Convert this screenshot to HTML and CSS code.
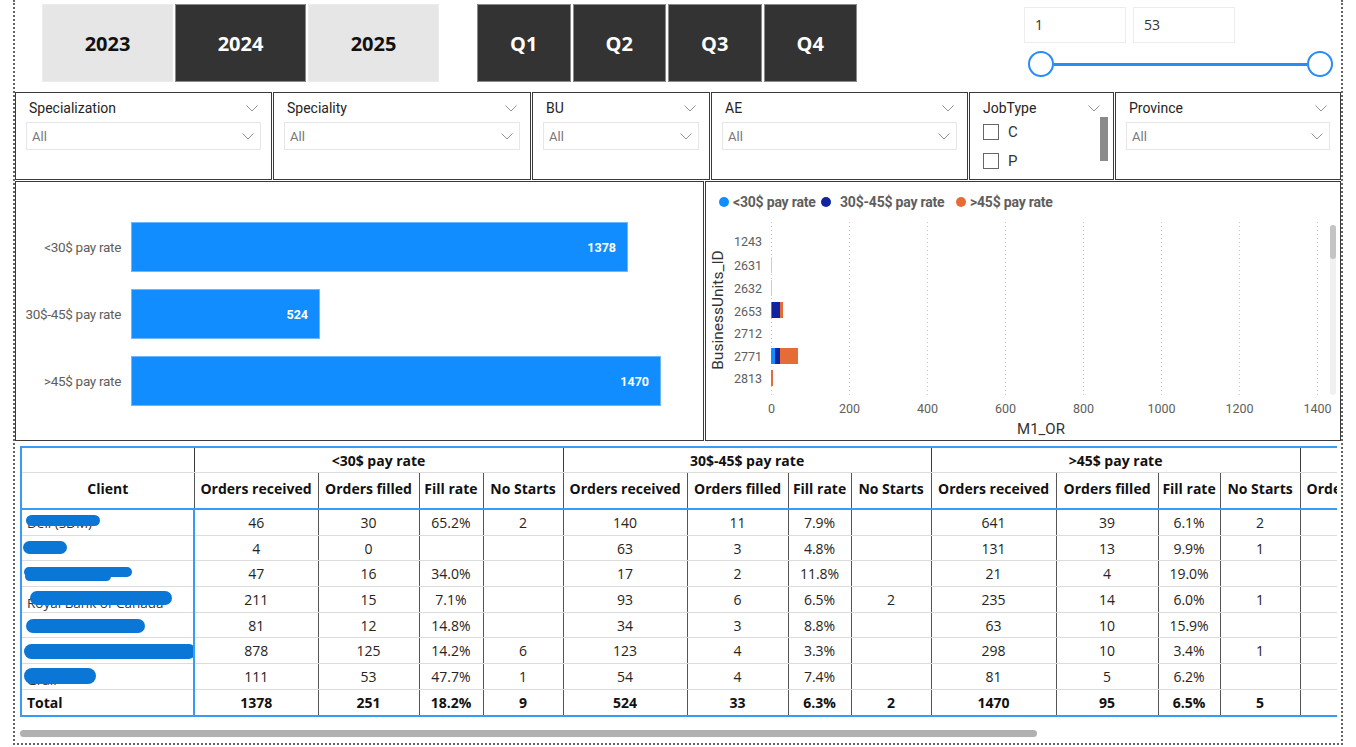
FILE: index.html
```html
<!DOCTYPE html>
<html>
<head>
<meta charset="utf-8">
<link rel="stylesheet" href="styles.css">
</head>
<body>
<div class="report">
  <div class="top-row">
    <div class="years">
      <div class="btn light">2023</div>
      <div class="btn dark">2024</div>
      <div class="btn light">2025</div>
    </div>
    <div class="quarters">
      <div class="qbtn">Q1</div>
      <div class="qbtn">Q2</div>
      <div class="qbtn">Q3</div>
      <div class="qbtn">Q4</div>
    </div>
    <div class="range">
      <div class="range-inputs">
        <div class="rbox">1</div>
        <div class="rbox">53</div>
      </div>
      <div class="slider">
        <span class="handle"></span>
        <span class="track"></span>
        <span class="handle"></span>
      </div>
    </div>
  </div>

  <div class="filters">
    <div class="slicer w-a">
      <div class="s-title"><span>Specialization</span><svg class="chev" viewBox="0 0 12 7"><polyline points="0.5,0.5 6,6 11.5,0.5"/></svg></div>
      <div class="dd"><span>All</span><svg class="chev" viewBox="0 0 12 7"><polyline points="0.5,0.5 6,6 11.5,0.5"/></svg></div>
    </div>
    <div class="slicer w-b">
      <div class="s-title"><span>Speciality</span><svg class="chev" viewBox="0 0 12 7"><polyline points="0.5,0.5 6,6 11.5,0.5"/></svg></div>
      <div class="dd"><span>All</span><svg class="chev" viewBox="0 0 12 7"><polyline points="0.5,0.5 6,6 11.5,0.5"/></svg></div>
    </div>
    <div class="slicer w-c">
      <div class="s-title"><span>BU</span><svg class="chev" viewBox="0 0 12 7"><polyline points="0.5,0.5 6,6 11.5,0.5"/></svg></div>
      <div class="dd"><span>All</span><svg class="chev" viewBox="0 0 12 7"><polyline points="0.5,0.5 6,6 11.5,0.5"/></svg></div>
    </div>
    <div class="slicer w-d">
      <div class="s-title"><span>AE</span><svg class="chev" viewBox="0 0 12 7"><polyline points="0.5,0.5 6,6 11.5,0.5"/></svg></div>
      <div class="dd"><span>All</span><svg class="chev" viewBox="0 0 12 7"><polyline points="0.5,0.5 6,6 11.5,0.5"/></svg></div>
    </div>
    <div class="slicer w-e jobtype">
      <div class="s-title"><span>JobType</span><svg class="chev" viewBox="0 0 12 7"><polyline points="0.5,0.5 6,6 11.5,0.5"/></svg></div>
      <div class="job-body">
        <div class="checks">
          <div class="chk"><span class="box"></span><span>C</span></div>
          <div class="chk"><span class="box"></span><span>P</span></div>
        </div>
        <div class="vscroll"></div>
      </div>
    </div>
    <div class="slicer w-f">
      <div class="s-title"><span>Province</span><svg class="chev" viewBox="0 0 12 7"><polyline points="0.5,0.5 6,6 11.5,0.5"/></svg></div>
      <div class="dd"><span>All</span><svg class="chev" viewBox="0 0 12 7"><polyline points="0.5,0.5 6,6 11.5,0.5"/></svg></div>
    </div>
  </div>

  <div class="charts">
    <div class="panel bar-panel">
      <div class="bar-row">
        <div class="bar-label">&lt;30$ pay rate</div>
        <div class="bar" style="width:497px"><span>1378</span></div>
      </div>
      <div class="bar-row">
        <div class="bar-label">30$-45$ pay rate</div>
        <div class="bar" style="width:189px"><span>524</span></div>
      </div>
      <div class="bar-row">
        <div class="bar-label">&gt;45$ pay rate</div>
        <div class="bar" style="width:530px"><span>1470</span></div>
      </div>
    </div>
    <div class="panel stack-panel">
      <svg class="stack" width="634" height="258" viewBox="0 0 634 258">
        <circle cx="18" cy="20" r="5" fill="#118dff"/>
        <text class="legend" x="27" y="25">&lt;30$ pay rate</text>
        <circle cx="120" cy="20" r="5" fill="#12239e"/>
        <text class="legend" x="134" y="25">30$-45$ pay rate</text>
        <circle cx="255" cy="20" r="5" fill="#e66c37"/>
        <text class="legend" x="264" y="25">&gt;45$ pay rate</text>

        <g class="grid">
          <line x1="65.5" y1="40" x2="65.5" y2="214"/>
          <line x1="143.5" y1="40" x2="143.5" y2="214"/>
          <line x1="221.5" y1="40" x2="221.5" y2="214"/>
          <line x1="299.5" y1="40" x2="299.5" y2="214"/>
          <line x1="377.5" y1="40" x2="377.5" y2="214"/>
          <line x1="455.5" y1="40" x2="455.5" y2="214"/>
          <line x1="533.5" y1="40" x2="533.5" y2="214"/>
          <line x1="611.5" y1="40" x2="611.5" y2="214"/>
        </g>

        <g class="cat">
          <text x="56" y="63.5">1243</text>
          <text x="56" y="87.5">2631</text>
          <text x="56" y="110.5">2632</text>
          <text x="56" y="133.5">2653</text>
          <text x="56" y="155.5">2712</text>
          <text x="56" y="178.5">2771</text>
          <text x="56" y="200.5">2813</text>
        </g>

        <text class="ytitle" transform="translate(16.5 128) rotate(-90)">BusinessUnits_ID</text>

        <rect x="65" y="75" width="1" height="16" fill="#f5c1ab"/>
        <rect x="65" y="98" width="1" height="16" fill="#f5c1ab"/>
        <rect x="65" y="120" width="1" height="16" fill="#118dff"/>
        <rect x="66" y="120" width="8" height="16" fill="#12239e"/>
        <rect x="74" y="120" width="3" height="16" fill="#e66c37"/>
        <rect x="65" y="166" width="4" height="16" fill="#118dff"/>
        <rect x="69" y="166" width="5" height="16" fill="#12239e"/>
        <rect x="74" y="166" width="18" height="16" fill="#e66c37"/>
        <rect x="65" y="188" width="2" height="16" fill="#e66c37"/>

        <g class="xl">
          <text x="65.5" y="231">0</text>
          <text x="143.5" y="231">200</text>
          <text x="221.5" y="231">400</text>
          <text x="299.5" y="231">600</text>
          <text x="377.5" y="231">800</text>
          <text x="455.5" y="231">1000</text>
          <text x="533.5" y="231">1200</text>
          <text x="611.5" y="231">1400</text>
        </g>
        <text class="xtitle" x="335" y="252">M1_OR</text>

        <rect x="624" y="43" width="6" height="170" rx="3" fill="#f0f0f0"/>
        <rect x="624" y="43" width="6" height="34" rx="3" fill="#c4c4c4"/>
      </svg>
    </div>
  </div>

  <div class="table-wrap">
    <table class="matrix">
      <colgroup>
        <col class="c-client">
        <col class="c-or"><col class="c-of"><col class="c-fr"><col class="c-ns">
        <col class="c-or"><col class="c-of"><col class="c-fr2"><col class="c-ns">
        <col class="c-or3"><col class="c-of3"><col class="c-fr3"><col class="c-ns">
        <col class="c-last">
      </colgroup>
      <thead>
        <tr class="h1">
          <th class="client-h"></th>
          <th colspan="4">&lt;30$ pay rate</th>
          <th colspan="4">30$-45$ pay rate</th>
          <th colspan="4">&gt;45$ pay rate</th>
          <th></th>
        </tr>
        <tr class="h2">
          <th class="client-h">Client</th>
          <th>Orders received</th><th>Orders filled</th><th>Fill rate</th><th>No Starts</th>
          <th>Orders received</th><th>Orders filled</th><th>Fill rate</th><th>No Starts</th>
          <th>Orders received</th><th>Orders filled</th><th>Fill rate</th><th>No Starts</th>
          <th class="clip">Orders</th>
        </tr>
      </thead>
      <tbody>
        <tr>
          <td class="client"><span class="under">Dell (SDM)</span><span class="redact r1"></span></td>
          <td>46</td><td>30</td><td>65.2%</td><td>2</td>
          <td>140</td><td>11</td><td>7.9%</td><td></td>
          <td>641</td><td>39</td><td>6.1%</td><td>2</td><td></td>
        </tr>
        <tr>
          <td class="client"><span class="redact r2"></span></td>
          <td>4</td><td>0</td><td></td><td></td>
          <td>63</td><td>3</td><td>4.8%</td><td></td>
          <td>131</td><td>13</td><td>9.9%</td><td>1</td><td></td>
        </tr>
        <tr>
          <td class="client"><span class="redact r3"></span><span class="redact r3b"></span></td>
          <td>47</td><td>16</td><td>34.0%</td><td></td>
          <td>17</td><td>2</td><td>11.8%</td><td></td>
          <td>21</td><td>4</td><td>19.0%</td><td></td><td></td>
        </tr>
        <tr>
          <td class="client"><span class="under low">Royal Bank of Canada</span><span class="redact r4"></span></td>
          <td>211</td><td>15</td><td>7.1%</td><td></td>
          <td>93</td><td>6</td><td>6.5%</td><td>2</td>
          <td>235</td><td>14</td><td>6.0%</td><td>1</td><td></td>
        </tr>
        <tr>
          <td class="client"><span class="redact r5"></span></td>
          <td>81</td><td>12</td><td>14.8%</td><td></td>
          <td>34</td><td>3</td><td>8.8%</td><td></td>
          <td>63</td><td>10</td><td>15.9%</td><td></td><td></td>
        </tr>
        <tr>
          <td class="client"><span class="redact r6"></span></td>
          <td>878</td><td>125</td><td>14.2%</td><td>6</td>
          <td>123</td><td>4</td><td>3.3%</td><td></td>
          <td>298</td><td>10</td><td>3.4%</td><td>1</td><td></td>
        </tr>
        <tr>
          <td class="client"><span class="under low">Grail</span><span class="redact r7"></span></td>
          <td>111</td><td>53</td><td>47.7%</td><td>1</td>
          <td>54</td><td>4</td><td>7.4%</td><td></td>
          <td>81</td><td>5</td><td>6.2%</td><td></td><td></td>
        </tr>
        <tr class="total">
          <td class="client">Total</td>
          <td>1378</td><td>251</td><td>18.2%</td><td>9</td>
          <td>524</td><td>33</td><td>6.3%</td><td>2</td>
          <td>1470</td><td>95</td><td>6.5%</td><td>5</td><td></td>
        </tr>
      </tbody>
    </table>
    <div class="hscroll"></div>
  </div>
</div>
</body>
</html>
```

FILE: styles.css
```css
html, body {
  margin: 0;
  padding: 0;
  background: #ffffff;
}
body {
  font-family: "Open Sans", "Noto Sans", sans-serif;
  color: #252423;
  width: 1356px;
  height: 747px;
  overflow: hidden;
}
.report {
  margin-left: 13px;
  width: 1330px;
  height: 745px;
  border: 2px dotted #666;
  border-top: none;
  box-sizing: border-box;
}

/* top row */
.top-row {
  height: 92px;
  display: flex;
  align-items: flex-start;
}
.years {
  display: flex;
  gap: 2px;
  margin-left: 27px;
  margin-top: 4px;
}
.btn {
  width: 131px;
  height: 78px;
  box-sizing: border-box;
  display: flex;
  align-items: center;
  justify-content: center;
  font-weight: 700;
  font-size: 20px;
}
.btn.light {
  background: #e6e6e6;
  color: #111;
  border: 1px solid #ececec;
}
.btn.dark {
  background: #333333;
  color: #fff;
  border: 1px solid #8a8a8a;
}
.quarters {
  display: flex;
  gap: 2px;
  margin-left: 38px;
  margin-top: 4px;
}
.qbtn {
  width: 93.5px;
  height: 78px;
  box-sizing: border-box;
  background: #333333;
  border: 1px solid #8a8a8a;
  color: #fff;
  font-weight: 700;
  font-size: 20px;
  display: flex;
  align-items: center;
  justify-content: center;
}
.range {
  margin-left: 167px;
  margin-top: 7px;
  width: 310px;
}
.range-inputs {
  display: flex;
  gap: 7px;
}
.rbox {
  width: 102px;
  height: 36px;
  box-sizing: border-box;
  border: 1px solid #ececec;
  padding-left: 10px;
  font-size: 14px;
  line-height: 34px;
  color: #333;
}
.slider {
  display: flex;
  align-items: center;
  width: 305px;
  margin-left: 4px;
  margin-top: 8px;
}
.handle {
  width: 26px;
  height: 26px;
  box-sizing: border-box;
  border: 2px solid #2a8cf3;
  border-radius: 50%;
  background: #fff;
  flex: none;
}
.track {
  flex: 1;
  height: 3px;
  background: #2a8cf3;
}

/* filters */
.filters {
  display: flex;
  gap: 1px;
  height: 88px;
}
.slicer {
  box-sizing: border-box;
  border: 1px solid #3a3a3a;
  height: 88px;
  padding: 6px 10px;
  font-family: Roboto, "Liberation Sans", sans-serif;
}
.w-a { width: 257px; }
.w-b { width: 258px; }
.w-c { width: 178px; }
.w-d { width: 257px; }
.w-e { width: 145px; }
.w-f { width: 226px; }
.s-title {
  height: 18px;
  display: flex;
  align-items: center;
  justify-content: space-between;
  padding: 0 3px 0 3px;
  font-size: 14px;
  color: #252423;
  margin-bottom: 5px;
}
.chev {
  width: 12px;
  height: 7px;
  fill: none;
  stroke: #888;
  stroke-width: 0.9;
}
.dd {
  height: 28px;
  box-sizing: border-box;
  border: 1px solid #e6e6e6;
  display: flex;
  align-items: center;
  justify-content: space-between;
  padding: 0 6px 0 5px;
  font-size: 13px;
  color: #777;
}
.jobtype {
  padding-left: 13px;
  padding-right: 5px;
}
.jobtype .s-title {
  padding: 0 8px 0 0;
  margin-bottom: 0;
}
.job-body {
  display: flex;
  justify-content: space-between;
}
.checks {
  display: flex;
  flex-direction: column;
  gap: 13px;
  padding-top: 7px;
}
.chk {
  display: flex;
  align-items: center;
  gap: 9px;
  font-size: 15px;
  color: #333;
  height: 16px;
}
.box {
  width: 16px;
  height: 16px;
  box-sizing: border-box;
  border: 1px solid #666;
  display: inline-block;
}
.vscroll {
  width: 8px;
  height: 44px;
  background: #8a8a8a;
}

/* charts */
.charts {
  display: flex;
  gap: 1px;
  margin-top: 1px;
  height: 260px;
}
.panel {
  box-sizing: border-box;
  border: 1px solid #3a3a3a;
  height: 260px;
}
.bar-panel {
  width: 689px;
  padding-top: 40px;
  display: flex;
  flex-direction: column;
  gap: 17px;
}
.bar-row {
  display: flex;
  align-items: center;
  height: 50px;
}
.bar-label {
  width: 105px;
  margin-right: 10px;
  text-align: right;
  font-family: Roboto, "Liberation Sans", sans-serif;
  font-size: 13.5px;
  color: #605e5c;
  white-space: nowrap;
  letter-spacing: -0.3px;
}
.bar {
  height: 50px;
  background: #118dff;
  box-sizing: border-box;
  border: 1px solid #6fb8ff;
  display: flex;
  align-items: center;
  justify-content: flex-end;
  padding-right: 11px;
}
.bar span {
  color: #fff;
  font-family: Roboto, "Liberation Sans", sans-serif;
  font-weight: 700;
  font-size: 12.5px;
}
.stack-panel {
  width: 636px;
}
.stack {
  display: block;
  font-family: Roboto, "Liberation Sans", sans-serif;
}
.stack .legend {
  font-size: 14px;
  font-weight: 700;
  fill: #605e5c;
  letter-spacing: -0.2px;
}
.stack .grid line {
  stroke: #c8c8c8;
  stroke-width: 1;
  stroke-dasharray: 1 3;
}
.stack .cat text {
  font-size: 12.5px;
  fill: #605e5c;
  text-anchor: end;
}
.stack .xl text {
  font-size: 12.5px;
  fill: #605e5c;
  text-anchor: middle;
}
.stack .ytitle {
  font-size: 15.5px;
  fill: #333;
  text-anchor: middle;
}
.stack .xtitle {
  font-size: 15px;
  fill: #333;
  text-anchor: middle;
}

/* table */
.table-wrap {
  margin-top: 5px;
  margin-left: 5px;
  width: 1321px;
  overflow: hidden;
}
.matrix {
  border-collapse: collapse;
  table-layout: fixed;
  width: 1316px;
  font-size: 14px;
  color: #252423;
}
.c-client { width: 173px; }
.c-or { width: 124px; }
.c-of { width: 101px; }
.c-fr { width: 64px; }
.c-fr2 { width: 63px; }
.c-ns { width: 80px; }
.c-or3 { width: 125px; }
.c-of3 { width: 102px; }
.c-fr3 { width: 62px; }
.c-last { width: 37px; }

.matrix th, .matrix td {
  padding: 0;
  overflow: hidden;
  white-space: nowrap;
  text-align: center;
}
.matrix th {
  font-weight: 700;
  color: #111;
}
.h1 th {
  height: 24px;
  border-top: 2px solid #3a9bf5;
  border-left: 1px solid #3a3a3a;
  border-bottom: 1px solid #dcdcdc;
}
.h2 th {
  height: 30px;
  padding-bottom: 5px;
  border-left: 1px solid #555;
  border-bottom: 2px solid #3a9bf5;
}
.matrix th.client-h {
  border-left: 2px solid #3a9bf5;
}
.matrix th.clip {
  text-align: left;
  padding-left: 6px;
}
.matrix td {
  height: 24.7px;
  border-left: 1px solid #555;
  border-bottom: 1px solid #dcdcdc;
}
.matrix td.client {
  border-left: 2px solid #3a9bf5;
  border-right: 2px solid #3a9bf5;
  text-align: left;
  position: relative;
  padding-left: 5px;
}
.total td {
  font-weight: 700;
  color: #111;
  border-bottom: 2px solid #3a9bf5;
}
.under {
  color: #333;
  font-size: 13.5px;
}
.under.low {
  position: relative;
  top: 3px;
}
.redact {
  position: absolute;
  background: #0a76d6;
  border-radius: 8px;
}
.r1 { left: 4px; top: 5px; width: 74px; height: 11px; }
.r2 { left: 1px; top: 5px; width: 44px; height: 13px; }
.r3 { left: 2px; top: 6px; width: 108px; height: 10px; }
.r3b { left: 3px; top: 11px; width: 86px; height: 9px; }
.r4 { left: 8px; top: 4px; width: 142px; height: 14px; }
.r5 { left: 4px; top: 6px; width: 119px; height: 14px; }
.r6 { left: 2px; top: 6px; width: 172px; height: 15px; }
.r7 { left: 2px; top: 4px; width: 72px; height: 16px; }

.hscroll {
  width: 1017px;
  height: 7px;
  border-radius: 4px;
  background: #b0b0b0;
  margin-top: 13px;
}
```
